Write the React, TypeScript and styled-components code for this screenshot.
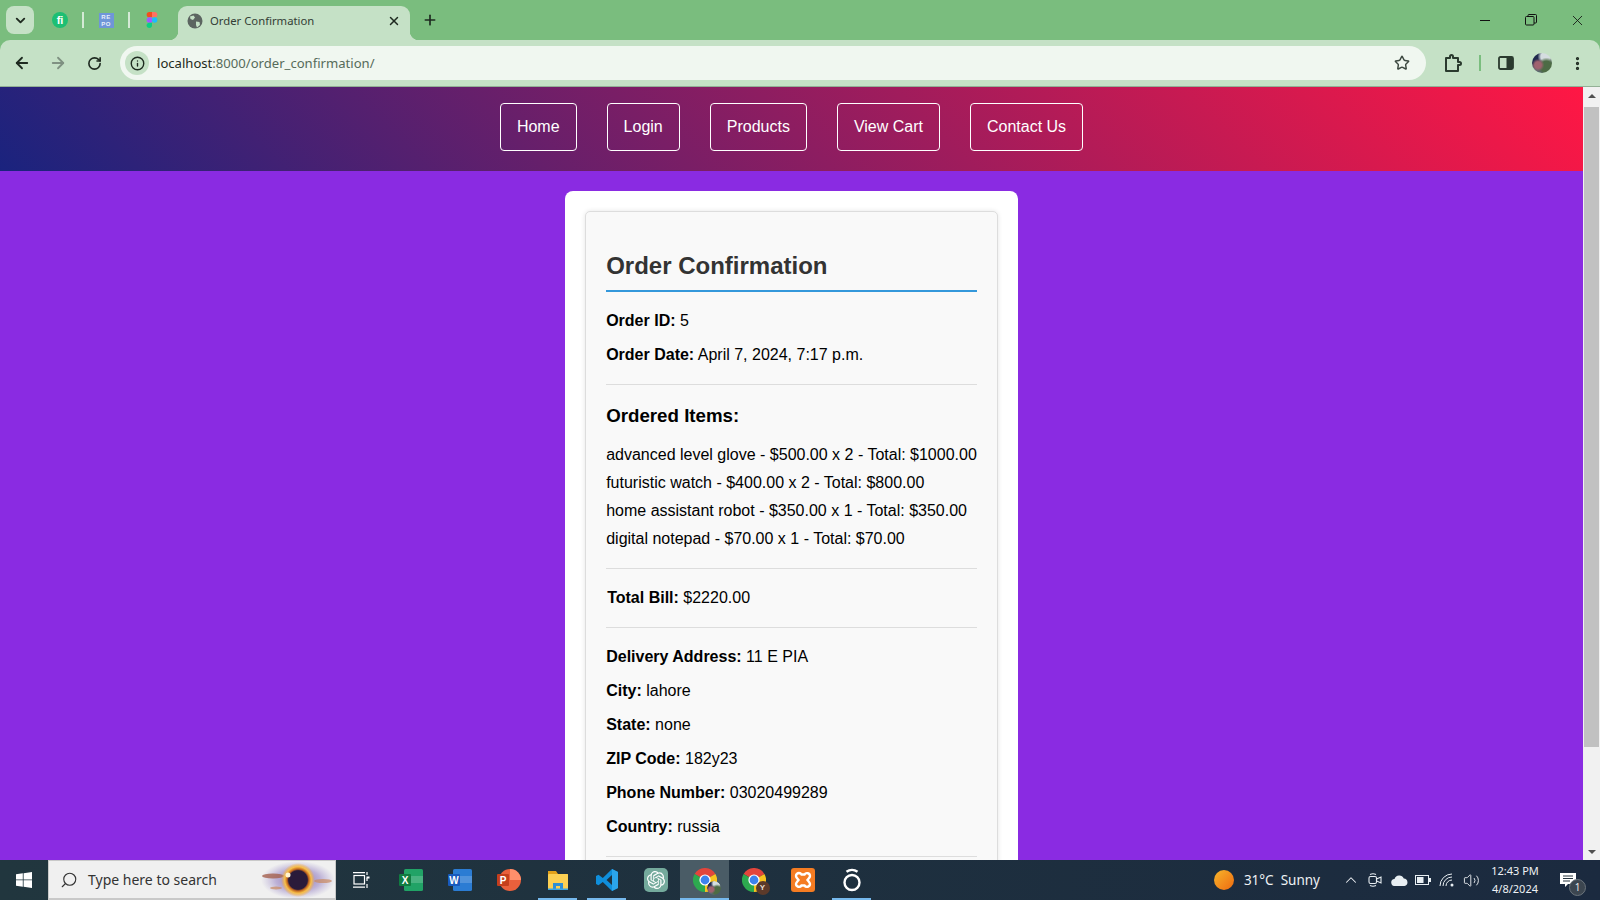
import React from "react"
import styled, { createGlobalStyle } from "styled-components"
import {
  ArrowLeft,
  ArrowRight,
  ChevronDown,
  ChevronUp,
  Info,
  MoreVertical,
  Plus,
  RotateCw,
  Search,
  Star,
  Volume2,
  X,
} from "lucide-react"
import { SiOpenai } from "react-icons/si"

const GlobalStyle = createGlobalStyle`
  html, body {
    margin: 0;
    width: 1600px;
    height: 900px;
    overflow: hidden;
    font-family: "Liberation Sans", Arial, sans-serif;
  }
  * { box-sizing: border-box; }
`

const Screen = styled.div`
  width: 1600px;
  height: 900px;
  display: flex;
  flex-direction: column;
  overflow: hidden;
  background: #7abd7e;
`

/* browser chrome */
const TabStrip = styled.div`
  height: 40px;
  flex: none;
  display: flex;
  align-items: flex-start;
  padding: 6px 0 0 6px;
`

const TabSearch = styled.div`
  width: 28px;
  height: 28px;
  border-radius: 8px;
  display: flex;
  align-items: center;
  justify-content: center;
  background: #c5e1c6;
  color: #1f2a20;
`

const PinnedTab = styled.div`
  width: 44px;
  height: 28px;
  display: flex;
  align-items: center;
  justify-content: center;
`

const PinnedRow = styled.div`
  display: flex;
  align-items: center;
  margin-left: 4px;
  width: 140px;
`

const TabSep = styled.span`
  width: 2px;
  height: 16px;
  flex: none;
  background: #d4ead5;
`

const FiverrDot = styled.span`
  width: 16px;
  height: 16px;
  border-radius: 50%;
  background: #1dbf73;
  color: #fff;
  font: bold 11px/16px "Liberation Sans", sans-serif;
  text-align: center;
`

const RepoBadge = styled.span`
  width: 15px;
  height: 15px;
  background: #6f96d8;
  color: #e8effa;
  font: bold 6px/7px "Liberation Sans", sans-serif;
  letter-spacing: 0.5px;
  text-align: center;
  padding-top: 1px;
`

const ActiveTab = styled.div`
  position: relative;
  width: 232px;
  height: 34px;
  display: flex;
  align-items: center;
  padding: 0 9px 5px 9px;
  border-radius: 9px 9px 0 0;
  background: #c5e1c6;
  color: #333d35;
  font: 11.3px "Noto Sans", sans-serif;

  &::before,
  &::after {
    content: "";
    position: absolute;
    bottom: 0;
    width: 9px;
    height: 9px;
  }
  &::before {
    left: -9px;
    background: radial-gradient(circle at 0 0, transparent 9px, #c5e1c6 9.5px);
  }
  &::after {
    right: -9px;
    background: radial-gradient(circle at 100% 0, transparent 9px, #c5e1c6 9.5px);
  }
`

const TabTitle = styled.span`
  flex: 1;
  margin-left: 7px;
`

const NewTab = styled.div`
  margin: 6px 0 0 12px;
  display: flex;
  color: #1e2a20;
`

const WindowControls = styled.div`
  margin-left: auto;
  display: flex;
  align-items: center;
  height: 28px;
  color: #111;
`

const WindowButton = styled.div`
  width: 46px;
  height: 28px;
  display: flex;
  align-items: center;
  justify-content: center;
`

const Toolbar = styled.div`
  height: 47px;
  flex: none;
  display: flex;
  align-items: flex-start;
  padding: 6px 0 0 4px;
  background: #c5e1c6;
  border-radius: 10px 10px 0 0;
  border-bottom: 1px solid #93b096;
`

const ToolbarButton = styled.div<{ $dim?: boolean; $narrow?: boolean }>`
  width: ${({ $narrow }) => ($narrow ? "34px" : "36px")};
  height: 34px;
  display: flex;
  align-items: center;
  justify-content: center;
  color: ${({ $dim }) => ($dim ? "#7f9182" : "#1e2a20")};
`

const Omnibox = styled.div`
  width: 1306px;
  height: 34px;
  margin-left: 8px;
  border-radius: 17px;
  background: #f0f7f0;
  display: flex;
  align-items: center;
  padding: 0 10px 0 5px;
  font: 13.1px "Noto Sans", sans-serif;
  color: #566b5a;
`

const SiteInfo = styled.span`
  width: 24px;
  height: 24px;
  border-radius: 50%;
  background: #c5e1c6;
  display: flex;
  align-items: center;
  justify-content: center;
  color: #1e2a20;
  margin-right: 8px;
`

const Host = styled.span`
  color: #1f2a20;
`

const StarSlot = styled.span`
  margin-left: auto;
  margin-right: 6px;
  display: flex;
  color: #3e4a42;
`

const ToolbarTail = styled.div`
  display: flex;
  align-items: center;
  height: 34px;
  margin-left: 9px;
`

const ToolbarSep = styled.span`
  width: 2px;
  height: 16px;
  margin: 0 7px 0 8px;
  background: #7abd7e;
`

const Avatar = styled.span<{ $size: number }>`
  width: ${({ $size }) => $size}px;
  height: ${({ $size }) => $size}px;
  border-radius: 50%;
  display: block;
  background:
    radial-gradient(circle at 30% 60%, #a0626f 0 18%, transparent 34%),
    radial-gradient(circle at 72% 68%, #4d6b45 0 28%, transparent 46%),
    radial-gradient(circle at 68% 18%, #d5dde0 0 22%, transparent 38%),
    radial-gradient(circle at 22% 25%, #20294d 0 30%, transparent 50%),
    #5a6a70;
`

/* page */
const Viewport = styled.div`
  flex: 1;
  min-height: 0;
  display: flex;
`

const Page = styled.main`
  flex: 1;
  min-width: 0;
  overflow: hidden;
  background: #8a2be2;
`

const Nav = styled.nav`
  height: 84px;
  display: flex;
  align-items: flex-start;
  justify-content: center;
  gap: 30px;
  padding-top: 16px;
  background: linear-gradient(45deg, #1a237e, #ff1744);
`

const NavLink = styled.a`
  padding: 14px 16px;
  border: 1px solid #fff;
  border-radius: 4px;
  color: #fff;
  font-size: 16px;
  line-height: 18px;
`

const Card = styled.div`
  width: fit-content;
  margin: 20px auto 0;
  padding: 20px;
  background: #fff;
  border-radius: 8px;
`

const Confirmation = styled.section`
  padding: 0 20px;
  background: #f9f9f9;
  border: 1px solid #ddd;
  border-radius: 5px;
  box-shadow: 0 0 5px rgba(0, 0, 0, 0.1);
  color: #000;
  font-size: 16px;
  line-height: 18px;
`

const Title = styled.h2`
  margin: 40px 0 20px;
  padding-bottom: 11px;
  border-bottom: 2px solid #3498db;
  color: #333;
  font-size: 24px;
  line-height: 27px;
`

const Line = styled.p<{ $indent?: boolean }>`
  margin: 16px 0;
  padding-left: ${({ $indent }) => ($indent ? "1px" : "0")};
`

const Rule = styled.hr`
  margin: 20px 0;
  border: 0;
  border-top: 1px solid #ddd;
`

const ItemsTitle = styled.h3`
  margin: 0 0 20px;
  font-size: 18.72px;
  line-height: 21px;
`

const Items = styled.ul`
  margin: 0;
  padding: 0;
  list-style: none;
  display: flex;
  flex-direction: column;
  gap: 10px;
  white-space: nowrap;
`

/* scrollbar */
const Scrollbar = styled.div`
  width: 17px;
  flex: none;
  display: flex;
  flex-direction: column;
  align-items: center;
  background: #f1f1f1;
`

const ScrollArrow = styled.span<{ $down?: boolean }>`
  width: 0;
  height: 0;
  margin: ${({ $down }) => ($down ? "auto 0 6px" : "7px 0 0")};
  border-left: 4px solid transparent;
  border-right: 4px solid transparent;
  ${({ $down }) =>
    $down ? "border-top: 4px solid #505050;" : "border-bottom: 4px solid #505050;"}
`

const ScrollThumb = styled.span`
  width: 15px;
  height: 640px;
  margin-top: 9px;
  background: #c1c1c1;
`

/* taskbar */
const Taskbar = styled.footer`
  height: 40px;
  flex: none;
  display: flex;
  align-items: center;
  background: linear-gradient(90deg, #21363e, #1b2a3f);
  color: #f1f4f6;
`

const StartButton = styled.div`
  width: 48px;
  height: 40px;
  display: flex;
  align-items: center;
  justify-content: center;
`

const SearchBox = styled.div`
  width: 288px;
  height: 40px;
  display: flex;
  align-items: center;
  padding-left: 11px;
  background: #f0f0f0;
  border: 1px solid #c9c9c9;
  border-bottom-width: 2px;
  color: #333;
  font: 14px "Noto Sans", sans-serif;
`

const SearchText = styled.span`
  flex: 1;
  margin-left: 10px;
  white-space: nowrap;
`

const TaskSlot = styled.div<{ $active?: boolean; $open?: boolean; $wide?: boolean }>`
  position: relative;
  width: ${({ $wide }) => ($wide ? "50px" : "49px")};
  height: 40px;
  display: flex;
  align-items: center;
  justify-content: center;
  background: ${({ $active }) => ($active ? "#4a5c66" : "transparent")};

  &::after {
    content: "";
    display: ${({ $open }) => ($open ? "block" : "none")};
    position: absolute;
    bottom: 0;
    left: ${({ $active }) => ($active ? "0" : "5px")};
    right: ${({ $active }) => ($active ? "0" : "5px")};
    height: 2px;
    background: #76b9ed;
  }
`

const AppTile = styled.span<{ $bg: string }>`
  width: 24px;
  height: 24px;
  border-radius: 5px;
  display: flex;
  align-items: center;
  justify-content: center;
  background: ${({ $bg }) => $bg};
  color: #fff;
`

const ChromeStack = styled.span`
  position: relative;
  width: 24px;
  height: 24px;
  display: block;
`

const ChromeBadge = styled.span<{ $color?: string }>`
  position: absolute;
  right: -4px;
  bottom: -3px;
  width: 14px;
  height: 14px;
  border-radius: 50%;
  background: ${({ $color }) => $color ?? "transparent"};
  color: #e8dccd;
  font: bold 8px/14px "Liberation Sans", sans-serif;
  text-align: center;
  overflow: hidden;
`

const Tray = styled.div`
  margin-left: auto;
  height: 40px;
  display: flex;
  align-items: center;
  font: 13.5px "Noto Sans", sans-serif;
  color: #eef1f4;
`

const Sun = styled.span`
  width: 20px;
  height: 20px;
  margin-right: 10px;
  border-radius: 50%;
  background: linear-gradient(135deg, #f7b52b, #ee6a10);
`

const Weather = styled.span`
  margin-right: 19px;
  white-space: nowrap;
`

const TrayIcon = styled.span`
  width: 24px;
  display: flex;
  justify-content: center;
`

const Clock = styled.div`
  width: 64px;
  margin-right: 6px;
  text-align: center;
  font-size: 11px;
  line-height: 18px;
  white-space: nowrap;
`

const Notify = styled.div`
  position: relative;
  width: 30px;
  height: 40px;
  margin-right: 17px;
  display: flex;
  align-items: center;
  justify-content: center;
`

const NotifyCount = styled.span`
  position: absolute;
  right: -3px;
  bottom: 4px;
  width: 17px;
  height: 17px;
  border-radius: 50%;
  background: #3c4650;
  border: 1px solid #6b747c;
  color: #e8e8e8;
  font-size: 10px;
  line-height: 15px;
  text-align: center;
`

const GlobeFilled = () => (
  <svg width="16" height="16" viewBox="0 0 16 16">
    <circle cx="8" cy="8" r="7.500" fill="#5c6561" />
    <path d="M3 3.500 6.500 2.500 8 4.500 6 7 3.500 6zM9 8.500l3.500.5.500 3L10 14.500 9 12z" fill="#c5e1c6" />
  </svg>
)

const FigmaLogo = () => (
  <svg width="12" height="16" viewBox="0 0 12 18">
    <path d="M3 0h3v6H3a3 3 0 0 1 0-6z" fill="#f24e1e" />
    <path d="M6 0h3a3 3 0 0 1 0 6H6z" fill="#ff7262" />
    <path d="M3 6h3v6H3a3 3 0 0 1 0-6z" fill="#a259ff" />
    <circle cx="9" cy="9" r="3" fill="#1abcfe" />
    <path d="M3 12h3v3a3 3 0 1 1-3-3z" fill="#0acf83" />
  </svg>
)

const WindowsLogo = () => (
  <svg width="16" height="16" viewBox="0 0 16 16" fill="#fff">
    <path d="M0 2.300 6.800 1.300v6.200H0zM7.600 1.200 16 0v7.500H7.600zM0 8.300h6.800v6.400L0 13.700zM7.600 8.300H16V16l-8.400-1.200z" />
  </svg>
)

const BlackHole = () => (
  <svg width="74" height="38" viewBox="0 0 74 38">
    <defs>
      <radialGradient id="haze">
        <stop offset="0" stopColor="#7a5ea8" stopOpacity="0.95" />
        <stop offset="0.6" stopColor="#9a86c4" stopOpacity="0.6" />
        <stop offset="1" stopColor="#a89ad0" stopOpacity="0" />
      </radialGradient>
      <radialGradient id="ring">
        <stop offset="0.55" stopColor="#2a1b3a" />
        <stop offset="0.64" stopColor="#c4671e" />
        <stop offset="0.78" stopColor="#f7c04a" />
        <stop offset="1" stopColor="#f7a93a" stopOpacity="0" />
      </radialGradient>
    </defs>
    <ellipse cx="37" cy="19" rx="37" ry="19" fill="url(#haze)" />
    <ellipse cx="12" cy="15" rx="11" ry="2.500" fill="#a5614f" opacity="0.8" />
    <ellipse cx="15" cy="27" rx="6" ry="1.500" fill="#c98960" opacity="0.7" />
    <ellipse cx="62" cy="20" rx="9" ry="2" fill="#c98960" opacity="0.7" />
    <circle cx="37" cy="19" r="17" fill="url(#ring)" />
    <circle cx="27" cy="14" r="2.500" fill="#fff3d0" />
  </svg>
)

const TaskView = () => (
  <svg width="17" height="16" viewBox="0 0 17 16" fill="none" stroke="#fff" strokeWidth="1.200">
    <rect x="1" y="3.500" width="10.500" height="8.500" />
    <path d="M0 .7h12M0 15.200h12M14 0v3M14 6v3M14 12v4" />
    <rect x="13.500" y="4.500" width="3" height="2" fill="#fff" stroke="none" />
  </svg>
)

const OfficeIcon = ({ body, tile, letter }: { body: string; tile: string; letter: string }) => (
  <svg width="24" height="22" viewBox="0 0 24 22">
    <rect x="5" y="0" width="19" height="22" rx="1.500" fill={body} />
    <rect x="5" y="7" width="19" height="7" fill="#fff" opacity="0.18" />
    <rect x="0" y="5" width="12" height="12" rx="1" fill={tile} />
    <text x="6" y="14.500" textAnchor="middle" fontSize="10" fontWeight="700" fill="#fff" fontFamily="Liberation Sans">
      {letter}
    </text>
  </svg>
)

const PowerPointIcon = () => (
  <svg width="24" height="24" viewBox="0 0 24 24">
    <circle cx="13" cy="12" r="11" fill="#e9603c" />
    <path d="M13 1a11 11 0 0 1 11 11H13z" fill="#ff8f6b" />
    <rect x="0" y="6" width="12" height="12" rx="1" fill="#c43e1c" />
    <text x="6" y="15.500" textAnchor="middle" fontSize="10" fontWeight="700" fill="#fff" fontFamily="Liberation Sans">
      P
    </text>
  </svg>
)

const FolderIcon = () => (
  <svg width="24" height="24" viewBox="0 0 24 24">
    <path d="M2 3h8l2 3h10v4H2z" fill="#e3a21a" />
    <rect x="2" y="6" width="20" height="16" rx="1" fill="#fcd053" />
    <path d="M7 22v-7h10v7h-3v-4h-4v4z" fill="#2d8fd5" />
    <rect x="2" y="20.500" width="20" height="1.500" fill="#39a3e4" />
  </svg>
)

const VsCodeIcon = () => (
  <svg width="24" height="24" viewBox="0 0 24 24">
    <path
      fillRule="evenodd"
      d="M17 1 23 4v16l-6 3L7.800 14l-4.300 3.300L1 16V8l2.500-1.300L7.800 10zM17 7l-5.500 5 5.500 5z"
      fill="#0f8fdc"
    />
    <path d="M17 1 23 4v16l-6 3z" fill="#2ba5ec" />
  </svg>
)

const ChromeLogo = () => (
  <svg width="24" height="24" viewBox="0 0 24 24">
    <path d="M12 12 1.600 6A12 12 0 0 1 22.400 6z" fill="#e2453c" />
    <path d="M12 12 22.400 6A12 12 0 0 1 12 24z" fill="#f9c31f" />
    <path d="M12 12 12 24A12 12 0 0 1 1.600 6z" fill="#2da94f" />
    <circle cx="12" cy="12" r="5.600" fill="#fff" />
    <circle cx="12" cy="12" r="4.400" fill="#3d82ee" />
  </svg>
)

const XamppIcon = () => (
  <svg width="24" height="24" viewBox="0 0 24 24">
    <rect width="24" height="24" rx="3" fill="#f57c22" />
    <path
      d="M8 5a3 3 0 0 0-3 3c0 1.600 1.400 2.500 2.500 4C6.400 13.500 5 14.400 5 16a3 3 0 0 0 5.500 1.500h3A3 3 0 0 0 19 16c0-1.600-1.400-2.500-2.500-4 1.100-1.500 2.500-2.400 2.500-4a3 3 0 0 0-5.500-1.500h-3A3 3 0 0 0 8 5z"
      fill="none"
      stroke="#fff"
      strokeWidth="2.400"
    />
  </svg>
)

const RingApp = () => (
  <svg width="20" height="24" viewBox="0 0 20 24" fill="none" stroke="#fff" strokeWidth="2.400">
    <circle cx="10" cy="14.500" r="7.500" />
    <path d="M4.500 3.800a9 9 0 0 1 11 0" />
  </svg>
)

const Extensions = () => (
  <svg width="20" height="20" viewBox="0 0 20 20" fill="none" stroke="#2a3a2e" strokeWidth="2" strokeLinejoin="round">
    <path d="M3 5h4V3.500a1.500 1.500 0 0 1 3 0V5h5v4h1.500a1.500 1.500 0 0 1 0 3H15v6H3z" />
  </svg>
)

const SidePanel = () => (
  <svg width="16" height="14" viewBox="0 0 16 14">
    <rect x="1" y="1" width="14" height="12" rx="1.500" fill="none" stroke="#2a3a2e" strokeWidth="1.800" />
    <rect x="8.500" y="1" width="6.500" height="12" fill="#2a3a2e" />
  </svg>
)

const Restore = () => (
  <svg width="12" height="12" viewBox="0 0 12 12" fill="none" stroke="#111" strokeWidth="1">
    <rect x="0.500" y="2.500" width="8.500" height="8.500" rx="1" />
    <path d="M3 2.500V1.500a1 1 0 0 1 1-1h6.500a1 1 0 0 1 1 1V8a1 1 0 0 1-1 1H9" />
  </svg>
)

const Minimize = () => (
  <svg width="12" height="12" viewBox="0 0 12 12" stroke="#111" strokeWidth="1">
    <path d="M1 6.500h10" />
  </svg>
)

const MeetIcon = () => (
  <svg width="16" height="16" viewBox="0 0 16 16" fill="none" stroke="#e8eef2" strokeWidth="1.100">
    <rect x="2" y="4.500" width="7.500" height="7" rx="1.500" />
    <path d="M9.500 7 14 5v6L9.500 9zM3 2.500a7 7 0 0 1 6 0M3 13.500a7 7 0 0 0 6 0" />
  </svg>
)

const CloudIcon = () => (
  <svg width="17" height="12" viewBox="0 0 17 12" fill="#e8eef2">
    <path d="M4 12a3.500 3.500 0 0 1-.5-7 5 5 0 0 1 9.300-.5A3.800 3.800 0 0 1 13.500 12z" />
  </svg>
)

const BatteryIcon = () => (
  <svg width="16" height="10" viewBox="0 0 16 10">
    <rect x="0.500" y="0.500" width="13" height="9" fill="none" stroke="#e8eef2" />
    <rect x="2" y="2" width="6.500" height="6" fill="#e8eef2" />
    <rect x="14" y="3" width="2" height="4" fill="#e8eef2" />
  </svg>
)

const WifiIcon = () => (
  <svg width="16" height="14" viewBox="0 0 16 14" fill="none" stroke="#e8eef2" strokeWidth="1">
    <path d="M1 13A12 12 0 0 1 13 1M4 13A9 9 0 0 1 13 4M7 13a6 6 0 0 1 6-6" />
    <circle cx="13" cy="12" r="1.500" fill="#e8eef2" stroke="none" />
  </svg>
)

const NotifyBubble = () => (
  <svg width="16" height="16" viewBox="0 0 16 16">
    <path d="M0 1h16v11H8l-3 3v-3H0z" fill="#fff" />
    <path d="M3 4h10M3 6.500h10M3 9h7" stroke="#26343f" strokeWidth="1" />
  </svg>
)

const pinned = [<FiverrDot key="fi">fi</FiverrDot>, <RepoBadge key="repo">RE<br />PO</RepoBadge>, <FigmaLogo key="figma" />]

const navLinks = ["Home", "Login", "Products", "View Cart", "Contact Us"]

const orderedItems = [
  "advanced level glove - $500.00 x 2 - Total: $1000.00",
  "futuristic watch - $400.00 x 2 - Total: $800.00",
  "home assistant robot - $350.00 x 1 - Total: $350.00",
  "digital notepad - $70.00 x 1 - Total: $70.00",
]

const addressLines = [
  ["Delivery Address:", "11 E PIA"],
  ["City:", "lahore"],
  ["State:", "none"],
  ["ZIP Code:", "182y23"],
  ["Phone Number:", "03020499289"],
  ["Country:", "russia"],
]

export default function App() {
  return (
    <Screen>
      <GlobalStyle />
      <TabStrip>
        <TabSearch>
          <ChevronDown size={15} strokeWidth={3} />
        </TabSearch>
        <PinnedRow>
          {pinned.map((icon, i) => (
            <React.Fragment key={i}>
              {i > 0 && <TabSep />}
              <PinnedTab>{icon}</PinnedTab>
            </React.Fragment>
          ))}
        </PinnedRow>
        <ActiveTab>
          <GlobeFilled />
          <TabTitle>Order Confirmation</TabTitle>
          <X size={14} strokeWidth={2.5} color="#1e2a20" />
        </ActiveTab>
        <NewTab>
          <Plus size={16} strokeWidth={2.5} />
        </NewTab>
        <WindowControls>
          <WindowButton><Minimize /></WindowButton>
          <WindowButton><Restore /></WindowButton>
          <WindowButton><X size={17} strokeWidth={1.2} /></WindowButton>
        </WindowControls>
      </TabStrip>

      <Toolbar>
        <ToolbarButton><ArrowLeft size={18} strokeWidth={2.4} /></ToolbarButton>
        <ToolbarButton $dim><ArrowRight size={18} strokeWidth={2.4} /></ToolbarButton>
        <ToolbarButton><RotateCw size={15} strokeWidth={2.6} /></ToolbarButton>
        <Omnibox>
          <SiteInfo><Info size={15} strokeWidth={2.2} /></SiteInfo>
          <Host>localhost</Host>:8000/order_confirmation/
          <StarSlot><Star size={16} strokeWidth={2.2} /></StarSlot>
        </Omnibox>
        <ToolbarTail>
          <ToolbarButton><Extensions /></ToolbarButton>
          <ToolbarSep />
          <ToolbarButton><SidePanel /></ToolbarButton>
          <ToolbarButton><Avatar $size={20} /></ToolbarButton>
          <ToolbarButton $narrow><MoreVertical size={17} strokeWidth={2.6} /></ToolbarButton>
        </ToolbarTail>
      </Toolbar>

      <Viewport>
        <Page>
          <Nav>
            {navLinks.map((link) => (
              <NavLink key={link}>{link}</NavLink>
            ))}
          </Nav>
          <Card>
            <Confirmation>
              <Title>Order Confirmation</Title>
              <Line><strong>Order ID:</strong> 5</Line>
              <Line><strong>Order Date:</strong> April 7, 2024, 7:17 p.m.</Line>
              <Rule />
              <ItemsTitle>Ordered Items:</ItemsTitle>
              <Items>
                {orderedItems.map((item) => (
                  <li key={item}>{item}</li>
                ))}
              </Items>
              <Rule />
              <Line $indent><strong>Total Bill:</strong> $2220.00</Line>
              <Rule />
              {addressLines.map(([label, value]) => (
                <Line key={label}><strong>{label}</strong> {value}</Line>
              ))}
              <Rule />
            </Confirmation>
          </Card>
        </Page>
        <Scrollbar>
          <ScrollArrow />
          <ScrollThumb />
          <ScrollArrow $down />
        </Scrollbar>
      </Viewport>

      <Taskbar>
        <StartButton><WindowsLogo /></StartButton>
        <SearchBox>
          <Search size={18} strokeWidth={1.5} style={{ transform: "scaleX(-1)" }} />
          <SearchText>Type here to search</SearchText>
          <BlackHole />
        </SearchBox>
        <TaskSlot $wide><TaskView /></TaskSlot>
        <TaskSlot><OfficeIcon body="#21a366" tile="#107c41" letter="X" /></TaskSlot>
        <TaskSlot><OfficeIcon body="#2b7cd3" tile="#185abd" letter="W" /></TaskSlot>
        <TaskSlot><PowerPointIcon /></TaskSlot>
        <TaskSlot $open><FolderIcon /></TaskSlot>
        <TaskSlot $open><VsCodeIcon /></TaskSlot>
        <TaskSlot><AppTile $bg="#74aa9c"><SiOpenai size={18} /></AppTile></TaskSlot>
        <TaskSlot $open $active>
          <ChromeStack>
            <ChromeLogo />
            <ChromeBadge><Avatar $size={14} /></ChromeBadge>
          </ChromeStack>
        </TaskSlot>
        <TaskSlot>
          <ChromeStack>
            <ChromeLogo />
            <ChromeBadge $color="#5c3a2a">Y</ChromeBadge>
          </ChromeStack>
        </TaskSlot>
        <TaskSlot><XamppIcon /></TaskSlot>
        <TaskSlot $open><RingApp /></TaskSlot>

        <Tray>
          <Sun />
          <Weather>31°C&nbsp;&nbsp;Sunny</Weather>
          <TrayIcon><ChevronUp size={18} strokeWidth={1.4} /></TrayIcon>
          <TrayIcon><MeetIcon /></TrayIcon>
          <TrayIcon><CloudIcon /></TrayIcon>
          <TrayIcon><BatteryIcon /></TrayIcon>
          <TrayIcon><WifiIcon /></TrayIcon>
          <TrayIcon><Volume2 size={17} strokeWidth={1.3} /></TrayIcon>
          <Clock>12:43 PM<br />4/8/2024</Clock>
          <Notify>
            <NotifyBubble />
            <NotifyCount>1</NotifyCount>
          </Notify>
        </Tray>
      </Taskbar>
    </Screen>
  )
}
